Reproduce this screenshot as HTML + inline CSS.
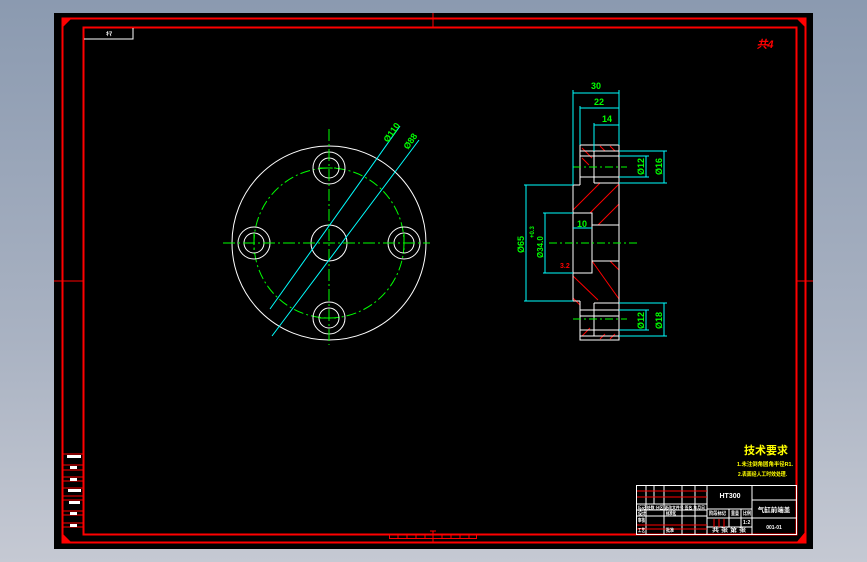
<!DOCTYPE html>
<html><head><meta charset="utf-8"><style>
html,body{margin:0;padding:0;}
body{width:867px;height:562px;overflow:hidden;background:linear-gradient(#8b9ab0,#a9b2c2 60%,#c5c9d3);}
svg{position:absolute;left:0;top:0;}
text{font-family:"Liberation Sans","Noto Sans CJK SC",sans-serif;font-weight:bold;}
</style></head><body>
<svg width="867" height="562" viewBox="0 0 867 562">
<rect x="54" y="13" width="759" height="536" fill="#000"/>
<rect x="62.5" y="18.5" width="743" height="524" fill="none" stroke="#f00" stroke-width="2"/>
<rect x="83.5" y="27.5" width="713" height="507" fill="none" stroke="#f00" stroke-width="2"/>
<polygon points="62,18 72,18 62,28" fill="#f00"/>
<polygon points="806,18 796,18 806,28" fill="#f00"/>
<polygon points="62,543 62,533 72,543" fill="#f00"/>
<polygon points="806,543 806,531 796,543" fill="#f00"/>
<line x1="433" y1="13" x2="433" y2="27" stroke="#f00"/>
<line x1="54" y1="281" x2="83" y2="281" stroke="#f00"/>
<line x1="797" y1="281" x2="813" y2="281" stroke="#f00"/>
<g stroke="#f00" fill="none"><rect x="389.5" y="534.5" width="87" height="4"/>
<line x1="398" y1="535" x2="398" y2="538"/><line x1="407" y1="535" x2="407" y2="538"/><line x1="416" y1="535" x2="416" y2="538"/><line x1="425" y1="535" x2="425" y2="538"/><line x1="442" y1="535" x2="442" y2="538"/><line x1="451" y1="535" x2="451" y2="538"/><line x1="460" y1="535" x2="460" y2="538"/><line x1="469" y1="535" x2="469" y2="538"/>
<line x1="433" y1="531" x2="433" y2="543"/><line x1="430" y1="531" x2="436" y2="531"/></g>
<polyline points="84,39 133,39 133,28" fill="none" stroke="#fff"/>
<text x="109" y="36" fill="#fff" font-size="6" text-anchor="middle">ｷﾏ</text>
<text x="765" y="48" fill="#f00" font-size="11" text-anchor="middle" font-style="italic">共4</text>
<g stroke="#f00"><line x1="63" y1="454" x2="83" y2="454"/><line x1="63" y1="465" x2="83" y2="465"/><line x1="63" y1="470" x2="83" y2="470"/><line x1="63" y1="477" x2="83" y2="477"/><line x1="63" y1="481" x2="83" y2="481"/><line x1="63" y1="488" x2="83" y2="488"/><line x1="63" y1="496" x2="83" y2="496"/><line x1="63" y1="500" x2="83" y2="500"/><line x1="63" y1="511" x2="83" y2="511"/><line x1="63" y1="515" x2="83" y2="515"/><line x1="63" y1="523" x2="83" y2="523"/><line x1="63" y1="527" x2="83" y2="527"/></g>
<g fill="#fff"><rect x="67" y="455" width="14" height="3"/><rect x="70" y="466" width="7" height="3"/><rect x="70" y="478" width="7" height="3"/><rect x="68" y="489" width="13" height="3"/><rect x="69" y="501" width="11" height="3"/><rect x="70" y="512" width="7" height="3"/><rect x="70" y="524" width="7" height="3"/></g>
<g fill="none">
<circle cx="329" cy="243" r="97" stroke="#fff"/>
<circle cx="329" cy="243" r="75" stroke="#0f0" stroke-dasharray="10,3,2,3"/>
<circle cx="329" cy="243" r="18" stroke="#fff"/>
<g stroke="#fff">
<circle cx="329" cy="168" r="16"/><circle cx="329" cy="168" r="10"/>
<circle cx="329" cy="318" r="16"/><circle cx="329" cy="318" r="10"/>
<circle cx="254" cy="243" r="16"/><circle cx="254" cy="243" r="10"/>
<circle cx="404" cy="243" r="16"/><circle cx="404" cy="243" r="10"/>
</g>
<g stroke="#0f0" stroke-dasharray="12,3,2,3">
<line x1="329" y1="129" x2="329" y2="345"/><line x1="223" y1="243" x2="430" y2="243"/>
<line x1="319" y1="168" x2="340" y2="168"/><line x1="319" y1="318" x2="340" y2="318"/>
<line x1="254" y1="233" x2="254" y2="254"/><line x1="404" y1="233" x2="404" y2="254"/>
</g>
<line x1="270" y1="309" x2="400" y2="126" stroke="#0ff"/>
<line x1="272" y1="336" x2="419" y2="140" stroke="#0ff"/>
</g>
<text x="0" y="0" fill="#0f0" font-size="9" transform="translate(388,143) rotate(-55)">Ø110</text>
<text x="0" y="0" fill="#0f0" font-size="9" transform="translate(408,150) rotate(-55)">Ø88</text>
<g fill="none">
<g stroke="#f00">
<line x1="582" y1="148" x2="592" y2="158"/><line x1="582" y1="158" x2="589" y2="165"/>
<line x1="600" y1="146" x2="605" y2="151"/><line x1="610" y1="146" x2="615" y2="151"/>
<line x1="573" y1="210" x2="600" y2="183"/><line x1="590" y1="213" x2="619" y2="184"/>
<line x1="598" y1="225" x2="619" y2="204"/>
<line x1="573" y1="276" x2="598" y2="300"/><line x1="592" y1="261" x2="619" y2="299"/>
<line x1="610" y1="261" x2="619" y2="270"/>
<line x1="573" y1="298" x2="580" y2="305"/>
<line x1="582" y1="336" x2="590" y2="328"/><line x1="600" y1="339" x2="605" y2="334"/><line x1="610" y1="339" x2="615" y2="334"/>
</g>
<g stroke="#fff">
<polyline points="580,185 580,145 619,145 619,340 580,340 580,301"/>
<polyline points="580,185 573,185 573,301 580,301"/>
<line x1="580" y1="151" x2="619" y2="151"/><line x1="580" y1="156" x2="619" y2="156"/>
<line x1="580" y1="177" x2="619" y2="177"/><line x1="594" y1="183" x2="619" y2="183"/>
<line x1="594" y1="151" x2="594" y2="183"/>
<line x1="580" y1="310" x2="619" y2="310"/><line x1="580" y1="316" x2="619" y2="316"/>
<line x1="580" y1="330" x2="619" y2="330"/><line x1="594" y1="303" x2="619" y2="303"/>
<line x1="594" y1="303" x2="594" y2="336"/><line x1="580" y1="336" x2="619" y2="336"/>
<polyline points="573,213 592,213 592,273 573,273"/>
<line x1="592" y1="225" x2="619" y2="225"/><line x1="592" y1="261" x2="619" y2="261"/>
</g>
<g stroke="#0f0" stroke-dasharray="8,3,2,3">
<line x1="573" y1="167" x2="627" y2="167"/><line x1="573" y1="319" x2="627" y2="319"/>
<line x1="549" y1="243" x2="637" y2="243"/>
</g>
<g stroke="#0ff">
<line x1="573" y1="90" x2="573" y2="185"/><line x1="580" y1="106" x2="580" y2="145"/>
<line x1="594" y1="123" x2="594" y2="151"/><line x1="619" y1="90" x2="619" y2="145"/>
<line x1="573" y1="93" x2="619" y2="93"/><line x1="580" y1="108" x2="619" y2="108"/><line x1="594" y1="125" x2="619" y2="125"/>
<line x1="524" y1="185" x2="573" y2="185"/><line x1="524" y1="301" x2="573" y2="301"/>
<line x1="526" y1="185" x2="526" y2="301"/>
<line x1="543" y1="213" x2="573" y2="213"/><line x1="543" y1="273" x2="573" y2="273"/>
<line x1="545" y1="213" x2="545" y2="273"/>
<line x1="619" y1="151" x2="667" y2="151"/><line x1="619" y1="183" x2="667" y2="183"/>
<line x1="619" y1="156" x2="649" y2="156"/><line x1="619" y1="177" x2="649" y2="177"/>
<line x1="646" y1="156" x2="646" y2="177"/><line x1="664" y1="151" x2="664" y2="183"/>
<line x1="619" y1="303" x2="667" y2="303"/><line x1="619" y1="336" x2="667" y2="336"/>
<line x1="619" y1="310" x2="649" y2="310"/><line x1="619" y1="330" x2="649" y2="330"/>
<line x1="646" y1="310" x2="646" y2="330"/><line x1="664" y1="303" x2="664" y2="336"/>
<line x1="573" y1="228" x2="592" y2="228"/>
</g>
</g>
<g fill="#0f0" font-size="9">
<text x="596" y="89" text-anchor="middle">30</text>
<text x="599" y="105" text-anchor="middle">22</text>
<text x="607" y="122" text-anchor="middle">14</text>
<text x="582" y="227" text-anchor="middle">10</text>
<text transform="translate(644,175) rotate(-90)">Ø12</text>
<text transform="translate(662,175) rotate(-90)">Ø16</text>
<text transform="translate(644,329) rotate(-90)">Ø12</text>
<text transform="translate(662,329) rotate(-90)">Ø18</text>
<text transform="translate(524,253) rotate(-90)">Ø65</text>
<text transform="translate(543,258) rotate(-90)" font-size="8">Ø34.0</text>
<text transform="translate(534,238) rotate(-90)" font-size="6">+0.3</text>
</g>
<text x="560" y="268" fill="#f00" font-size="7">3.2</text>
<g fill="#ff0">
<text x="766" y="454" font-size="11" text-anchor="middle">技术要求</text>
<text x="737" y="466" font-size="5.5" textLength="56" lengthAdjust="spacingAndGlyphs">1.未注倒角圆角半径R1.</text>
<text x="738" y="476" font-size="5.5" textLength="49" lengthAdjust="spacingAndGlyphs">2.表面经人工时效处理.</text>
</g>
<g stroke="#fff" fill="none">
<rect x="636.5" y="485.5" width="160" height="49"/>
<line x1="707" y1="485" x2="707" y2="534"/><line x1="752" y1="485" x2="752" y2="534"/>
<line x1="646" y1="485" x2="646" y2="534"/><line x1="654" y1="485" x2="654" y2="504"/>
<line x1="664" y1="485" x2="664" y2="534"/><line x1="682" y1="485" x2="682" y2="534"/>
<line x1="695" y1="485" x2="695" y2="534"/>
<line x1="636" y1="504" x2="707" y2="504"/><line x1="636" y1="510" x2="707" y2="510"/><line x1="636" y1="516" x2="707" y2="516"/>
<line x1="707" y1="509" x2="752" y2="509"/><line x1="707" y1="518" x2="752" y2="518"/><line x1="707" y1="527" x2="752" y2="527"/>
<line x1="729" y1="509" x2="729" y2="527"/><line x1="741" y1="509" x2="741" y2="527"/>
<line x1="752" y1="500" x2="796" y2="500"/><line x1="752" y1="518" x2="796" y2="518"/>
</g>
<g stroke="#f00"><line x1="637" y1="491" x2="707" y2="491"/><line x1="637" y1="497" x2="707" y2="497"/><line x1="637" y1="525" x2="707" y2="525"/><line x1="637" y1="529" x2="707" y2="529"/>
<line x1="714" y1="519" x2="714" y2="527"/><line x1="719" y1="519" x2="719" y2="527"/><line x1="724" y1="519" x2="724" y2="527"/></g>
<g fill="#fff" font-size="5">
<text x="730" y="498" font-size="7" text-anchor="middle">HT300</text>
<text x="774" y="512" font-size="6.5" text-anchor="middle">气缸前端盖</text>
<text x="774" y="529" text-anchor="middle">001-01</text>
<text x="638" y="509" font-size="4" textLength="67" lengthAdjust="spacingAndGlyphs">标记 处数 分区 更改文件号 签名 年月日</text>
<text x="638" y="515" textLength="8" lengthAdjust="spacingAndGlyphs">设计</text><text x="666" y="515" textLength="10" lengthAdjust="spacingAndGlyphs">标准化</text>
<text x="638" y="522" textLength="7" lengthAdjust="spacingAndGlyphs">审核</text><text x="638" y="532" textLength="7" lengthAdjust="spacingAndGlyphs">工艺</text><text x="666" y="532" textLength="8" lengthAdjust="spacingAndGlyphs">批准</text>
<text x="709" y="515" textLength="17" lengthAdjust="spacingAndGlyphs">阶段标记</text><text x="731" y="515" textLength="8" lengthAdjust="spacingAndGlyphs">重量</text><text x="743" y="515" textLength="8" lengthAdjust="spacingAndGlyphs">比例</text>
<text x="743" y="524">1:2</text>
<text x="712" y="532" textLength="34" lengthAdjust="spacingAndGlyphs">共  张 第  张</text>
</g>
</svg>
</body></html>
